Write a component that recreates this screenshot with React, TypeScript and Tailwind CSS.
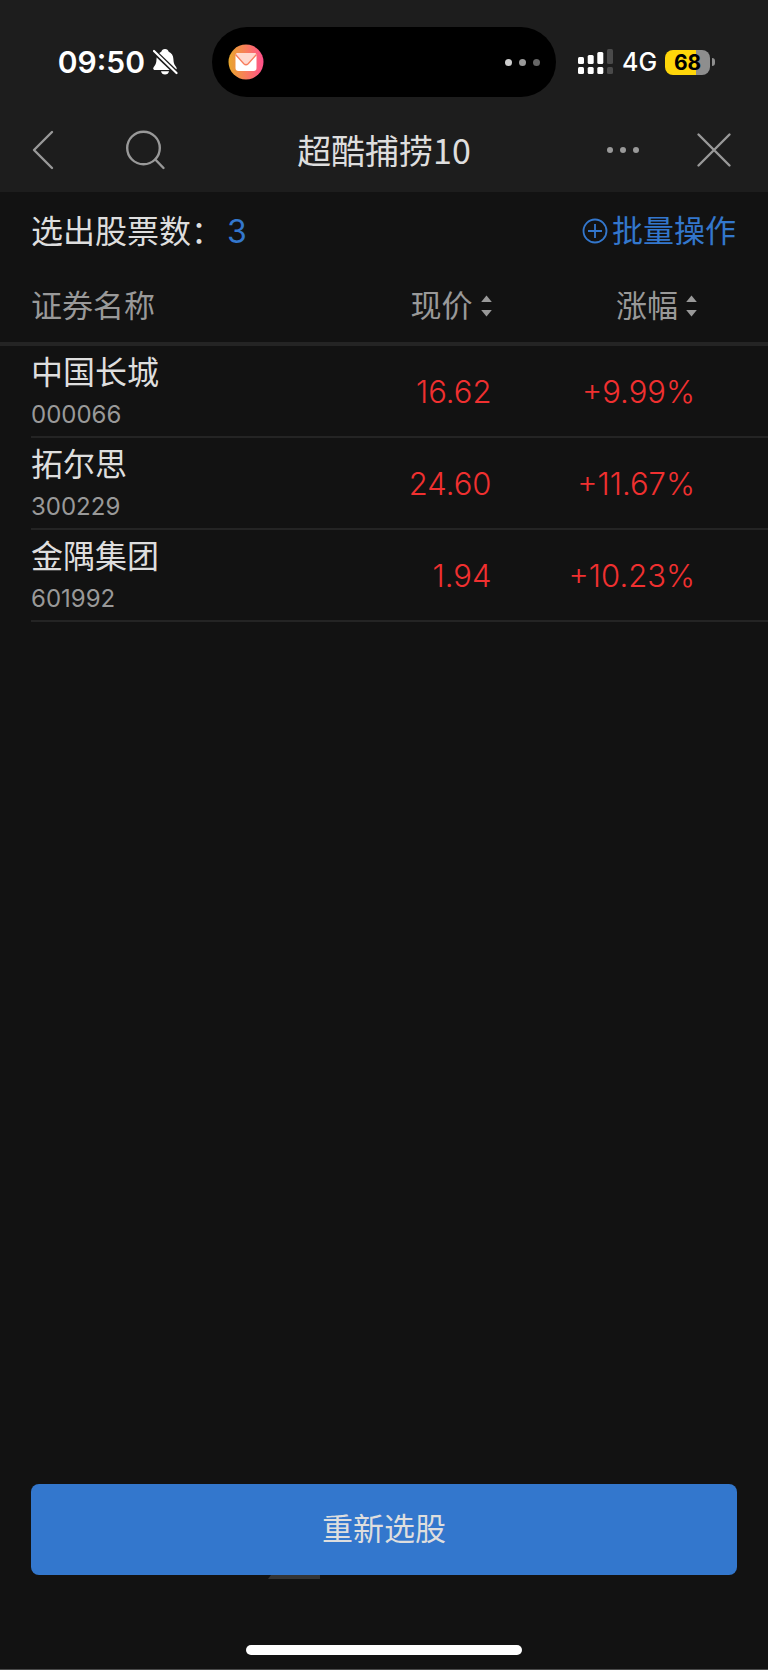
import React from 'react';

type Stock = {
  name: string;
  code: string;
  price: string;
  change: string;
};

const stocks: Stock[] = [
  { name: '中国长城', code: '000066', price: '16.62', change: '+9.99%' },
  { name: '拓尔思', code: '300229', price: '24.60', change: '+11.67%' },
  { name: '金隅集团', code: '601992', price: '1.94', change: '+10.23%' },
];

const BellOff = () => (
  <svg width="25" height="26" viewBox="0 0 25 26" aria-hidden="true">
    <path
      d="M12 0c2 0 3.300 1.200 3.700 2.800 3 1.200 4.500 3.800 4.700 7.200.2 3.400.5 5 2 6.900.9 1.200 1.300 1.900 1.300 2.600 0 .9-.7 1.500-1.800 1.500H2c-1.100 0-1.800-.6-1.800-1.500 0-.7.4-1.400 1.300-2.600 1.500-1.900 1.900-3.500 2-6.900.2-3.400 1.800-6 4.800-7.200C8.700 1.200 10 0 12 0z"
      fill="#fff"
    />
    <path d="M8 22.300h8c-.3 2-1.900 3.300-4 3.300s-3.700-1.300-4-3.300z" fill="#fff" />
    <path d="M0 1.500l24 23" stroke="#1d1d1d" strokeWidth="5" />
    <path d="M1 2l22.500 22" stroke="#fff" strokeWidth="2.200" strokeLinecap="round" />
  </svg>
);

const MailBadge = () => (
  <svg width="36" height="36" viewBox="0 0 36 36" aria-hidden="true">
    <defs>
      <linearGradient id="mail" x1="0" y1="0" x2="1" y2="0">
        <stop offset="0" stopColor="#e8a72c" />
        <stop offset="0.5" stopColor="#f87d5c" />
        <stop offset="1" stopColor="#ff4f8b" />
      </linearGradient>
    </defs>
    <circle cx="18" cy="18" r="17.500" fill="url(#mail)" />
    <rect x="7.500" y="9" width="21" height="18" rx="3" fill="#fff" />
    <path d="M10 9h16q2 0 2.500 1.500L20 19.500q-2 2-4 0L7.500 10.500Q8 9 10 9z" fill="#ffd9d0" />
    <path d="M7.500 10.500l8.300 9.300q2.200 2 4.400 0l8.300-9.300" fill="none" stroke="#f87d5c" strokeWidth="1.300" />
  </svg>
);

const Signal = () => (
  <svg width="36" height="26" viewBox="0 0 36 26" aria-hidden="true">
    <g fill="#fff">
      <rect x="0" y="8" width="6" height="7" rx="1.500" />
      <rect x="9.700" y="6" width="6" height="9" rx="1.500" />
      <rect x="19.300" y="3" width="6" height="12" rx="1.500" />
      <rect x="0" y="18" width="6" height="7" rx="1.500" />
      <rect x="9.700" y="18" width="6" height="7" rx="1.500" />
      <rect x="19.300" y="18" width="6" height="7" rx="1.500" />
    </g>
    <g fill="#4a4a4a">
      <rect x="29" y="0" width="6" height="15" rx="1.500" />
      <rect x="29" y="18" width="6" height="7" rx="1.500" />
    </g>
  </svg>
);

const SortArrows = () => (
  <svg width="11" height="22" viewBox="0 0 11 22" aria-hidden="true" fill="#999">
    <path d="M5.500 0.500l5.300 6.500H0.200z" />
    <path d="M5.500 21.500l5.300-6.500H0.200z" />
  </svg>
);

const StatusBar = () => (
  <div className="grid h-[108px] grid-cols-[1fr_344px_1fr] items-center pt-4 text-white">
    <div className="flex items-center justify-end gap-2 pr-[34px]">
      <span className="text-[30px] font-semibold leading-none">09:50</span>
      <BellOff />
    </div>
    <div className="flex h-[70px] items-center justify-between rounded-full bg-black px-4">
      <MailBadge />
      <div className="flex gap-[7px]">
        <span className="size-[7px] rounded-full bg-[#ccc]" />
        <span className="size-[7px] rounded-full bg-[#999]" />
        <span className="size-[7px] rounded-full bg-[#666]" />
      </div>
    </div>
    <div className="flex items-center gap-2 pl-[22px]">
      <Signal />
      <span className="text-[25px] font-medium leading-none">4G</span>
      <div className="flex items-center gap-[2px]">
        <div className="flex h-[25px] w-[45px] items-center justify-center rounded-lg bg-[linear-gradient(to_right,#ffd60a_68%,#8e8e8e_68%)] text-[21px] font-bold leading-none text-black">
          68
        </div>
        <span className="h-2 w-[3px] rounded-r-full bg-[#8e8e8e]" />
      </div>
    </div>
  </div>
);

const NavBar = () => (
  <nav className="grid h-[84px] grid-cols-[1fr_auto_1fr] items-center">
    <div className="flex items-center gap-[72px] pl-8">
      <button aria-label="返回">
        <svg width="22" height="40" viewBox="0 0 22 40" fill="none" stroke="#999" strokeWidth="2.400" strokeLinecap="round" strokeLinejoin="round">
          <path d="M20 2L2 20l18 18" />
        </svg>
      </button>
      <button aria-label="搜索">
        <svg width="40" height="40" viewBox="0 0 40 40" fill="none" stroke="#999" strokeWidth="2.400" strokeLinecap="round">
          <circle cx="17.500" cy="18" r="16.300" />
          <path d="M29.300 29.500L37.500 38" />
        </svg>
      </button>
    </div>
    <h1 className="text-[34px] leading-none text-[#dedede] font-['Noto_Sans_CJK_SC',sans-serif]">超酷捕捞10</h1>
    <div className="flex items-center justify-end gap-14 pr-9">
      <button aria-label="更多">
        <svg width="34" height="34" viewBox="0 0 34 34" fill="#999">
          <circle cx="4" cy="17" r="3" />
          <circle cx="17" cy="17" r="3" />
          <circle cx="30" cy="17" r="3" />
        </svg>
      </button>
      <button aria-label="关闭">
        <svg width="36" height="36" viewBox="0 0 36 36" stroke="#999" strokeWidth="2.400" strokeLinecap="round">
          <path d="M2.500 2.500l31 31M33.500 2.500l-31 31" />
        </svg>
      </button>
    </div>
  </nav>
);

export default function App() {
  return (
    <div className="flex min-h-screen flex-col border-b border-[#4a4a4a] bg-[#121212] font-['Inter','Noto_Sans_CJK_SC',sans-serif]">
      <header className="bg-[#1d1d1d]">
        <StatusBar />
        <NavBar />
      </header>

      <main className="flex flex-1 flex-col">
        <div className="flex h-[78px] items-center justify-between pl-[31px] pr-8">
          <p className="pt-[2px] text-[32px] text-[#dedede]">
            选出股票数：<span className="pl-1 text-[#3377cd]">3</span>
          </p>
          <button className="flex items-center gap-1 text-[31px] text-[#3377cd]">
            <svg width="26" height="26" viewBox="0 0 26 26" fill="none" stroke="#3377cd" strokeWidth="1.800">
              <circle cx="13" cy="13" r="11.500" />
              <path d="M13 6v14M6 13h14" />
            </svg>
            批量操作
          </button>
        </div>

        <table className="w-full table-fixed border-separate border-spacing-0 text-right">
          <thead>
            <tr className="h-[76px] text-[31px] text-[#999]">
              <th className="w-[38%] border-b-4 border-[#242424] p-0 pl-[31px] text-left font-normal">证券名称</th>
              <th className="w-[26%] border-b-4 border-[#242424] p-0 font-normal">
                <button className="inline-flex items-center gap-2">
                  现价
                  <SortArrows />
                </button>
              </th>
              <th className="border-b-4 border-[#242424] p-0 pr-[71px] font-normal">
                <button className="inline-flex items-center gap-2">
                  涨幅
                  <SortArrows />
                </button>
              </th>
            </tr>
          </thead>
          <tbody>
            {stocks.map((stock) => (
              <tr key={stock.code} className="text-[31px] text-[#f03030]">
                <td className="p-0 text-left">
                  <div className="ml-[31px] h-[92px] border-b-2 border-[#242424] pt-[7px]">
                    <p className="text-[32px] leading-10 text-[#dedede]">{stock.name}</p>
                    <p className="text-[24px] leading-11 text-[#999]">{stock.code}</p>
                  </div>
                </td>
                <td className="border-b-2 border-[#242424] p-0 pt-[2px] font-light">{stock.price}</td>
                <td className="border-b-2 border-[#242424] p-0 pr-[73px] pt-[2px] font-light">{stock.change}</td>
              </tr>
            ))}
          </tbody>
        </table>
      </main>

      <footer className="flex flex-col items-center px-[31px] pb-[14px]">
        <button className="h-[91px] w-full rounded-lg bg-[#3377cd] text-[31px] text-[#dedede]">
          重新选股
        </button>
        <div className="flex w-full pl-[237px]">
          <svg width="52" height="4" viewBox="0 0 52 4" aria-hidden="true">
            <path d="M3 0h49v4H0z" fill="#333" />
          </svg>
        </div>
        <div className="mt-[66px] h-[10px] w-[276px] rounded-full bg-white" />
      </footer>
    </div>
  );
}
